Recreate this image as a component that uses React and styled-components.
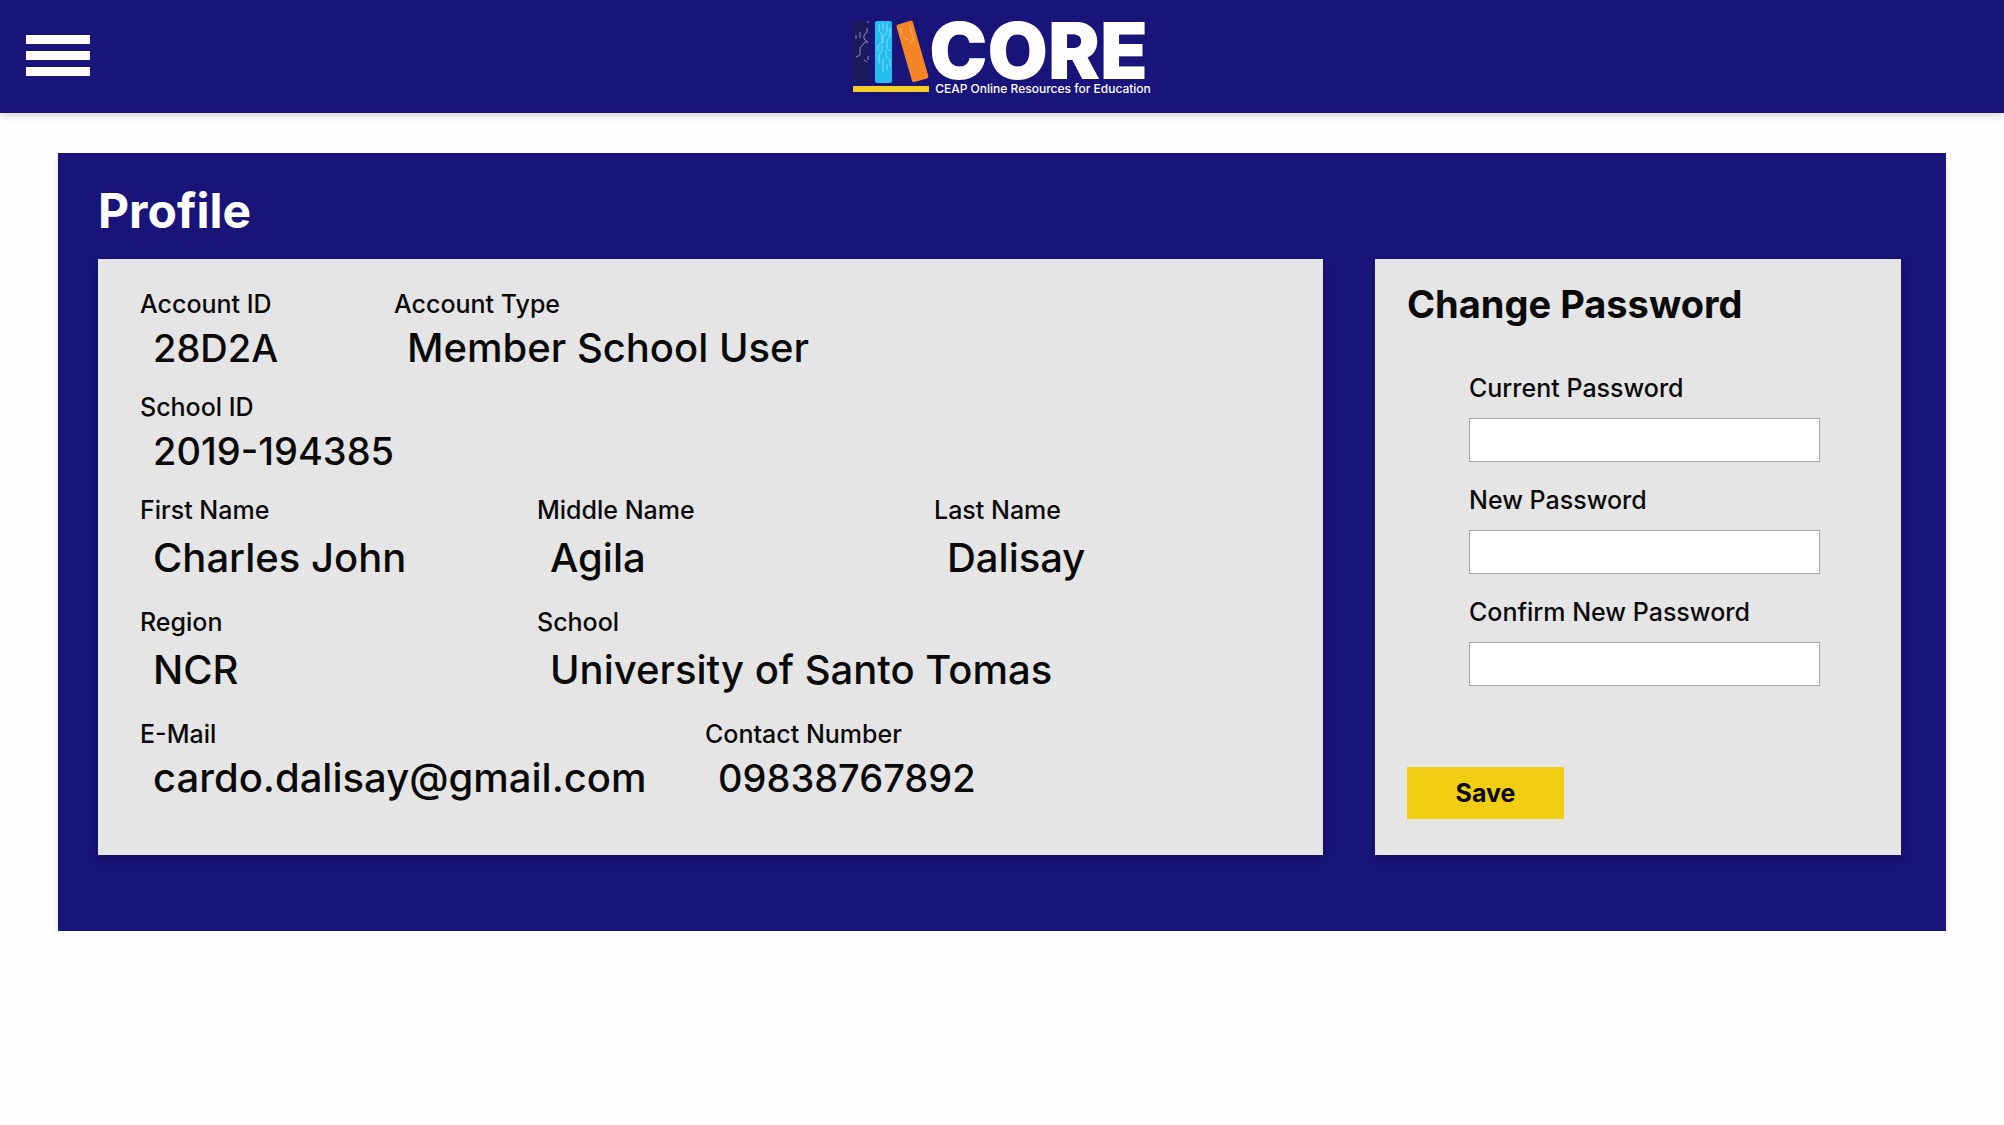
import React, { useId } from "react";
import styled, { createGlobalStyle } from "styled-components";

const GlobalStyle = createGlobalStyle`
  *, *::before, *::after { box-sizing: border-box; }
  body {
    margin: 0;
    background: #fefefe;
    color: #0a0a0a;
    font-family: Inter, "Open Sans", sans-serif;
    font-weight: 500;
  }
`;

const Header = styled.header`
  display: grid;
  grid-template-columns: 1fr auto 1fr;
  align-items: start;
  height: 113px;
  padding: 0 26px;
  background: #18147a;
  box-shadow: 0 4px 6px rgba(0, 0, 0, 0.12);
`;

const MenuButton = styled.button`
  display: flex;
  flex-direction: column;
  justify-self: start;
  gap: 7px;
  width: 64px;
  margin: 35px 0 0;
  padding: 0;
  border: 0;
  background: none;
  cursor: pointer;
`;

const MenuBar = styled.span`
  height: 9px;
  background: #fff;
`;

const Brand = styled.a`
  display: flex;
  padding-top: 20px;
  color: #fff;
  text-decoration: none;
`;

const BrandText = styled.span`
  display: flex;
  flex-direction: column;
`;

const BrandName = styled.span`
  font-size: 78px;
  font-weight: 900;
  line-height: 62px;
`;

const Tagline = styled.span`
  padding: 2px 0 0 6px;
  font-size: 12px;
  line-height: 10px;
`;

const Panel = styled.main`
  margin: 40px 58px 0;
  padding: 30px 45px 76px 40px;
  background: #18147a;
  box-shadow: 0 4px 6px rgba(0, 0, 0, 0.12);
`;

const PageTitle = styled.h1`
  margin: 0 0 20px;
  color: #fff;
  font-size: 48px;
  font-weight: 700;
  line-height: 56px;
`;

const Columns = styled.div`
  display: grid;
  grid-template-columns: 1225fr 526fr;
  gap: 52px;
`;

const Card = styled.section`
  background: #e5e5e5;
  box-shadow: 0 4px 8px rgba(0, 0, 0, 0.25);
`;

const Details = styled(Card)`
  padding: 31px 0 55px 42px;
`;

const Row = styled.dl`
  display: grid;
  grid-template-columns: ${(p) => p.$columns};
  margin: 0 0 ${(p) => (p.$roomy ? 28 : 23)}px;

  &:last-child { margin-bottom: 0; }

  dd { margin-top: ${(p) => (p.$roomy ? 12 : 8)}px; }
`;

const Term = styled.dt`
  font-size: 25px;
  line-height: 28px;
`;

const Value = styled.dd`
  margin: 0;
  padding-left: 13px;
  font-size: ${(p) => (p.$numeric ? 38 : 40)}px;
  line-height: 44px;
  white-space: nowrap;
`;

const PasswordForm = styled(Card).attrs({ as: "form" })`
  display: flex;
  flex-direction: column;
  padding: 21px 32px 36px;
`;

const FormTitle = styled.h2`
  margin: 0 0 46px;
  font-size: 38px;
  font-weight: 700;
  line-height: 48px;
`;

const Fields = styled.div`
  display: grid;
  gap: 24px;
  padding: 0 49px 0 62px;
`;

const Field = styled.div`
  display: grid;
  gap: 16px;
`;

const FieldLabel = styled.label`
  font-size: 25px;
  line-height: 28px;
  white-space: nowrap;
`;

const TextInput = styled.input`
  width: 100%;
  height: 44px;
  padding: 0 12px;
  border: 1px solid #a6a6a6;
  border-radius: 0;
  background: #fff;
  font: inherit;
  font-size: 25px;
`;

const SaveButton = styled.button`
  align-self: flex-start;
  width: 157px;
  height: 52px;
  margin-top: auto;
  border: 0;
  background: #f1cd13;
  color: #0a0a0a;
  font: inherit;
  font-size: 25px;
  font-weight: 700;
  cursor: pointer;
`;

const rows = [
  { columns: "254fr 929fr", items: [["Account ID", "28D2A"], ["Account Type", "Member School User"]] },
  { columns: "1fr", items: [["School ID", "2019-194385"]] },
  { columns: "397fr 397fr 389fr", roomy: true, items: [["First Name", "Charles John"], ["Middle Name", "Agila"], ["Last Name", "Dalisay"]] },
  { columns: "397fr 786fr", roomy: true, items: [["Region", "NCR"], ["School", "University of Santo Tomas"]] },
  { columns: "565fr 618fr", items: [["E-Mail", "cardo.dalisay@gmail.com"], ["Contact Number", "09838767892"]] },
];

function Books() {
  return (
    <svg width="76" height="74" viewBox="0 0 76 74" aria-hidden="true">
      <rect x="0" y="1" width="16" height="62" rx="1" fill="#1d1a5c" />
      <g fill="none" stroke="#8a8fb8" strokeWidth="1">
        <path d="M3 15v4M15 1v2M14 8v4l-3 3v4l4 3M7 12v6M15 22h-3l-5 6v7l-4 2M11 40l3 2M15 36v4" />
      </g>
      <rect x="22" y="1" width="17" height="62" rx="2" fill="#25bdf0" />
      <g fill="none" stroke="#86dcf6" strokeWidth="1">
        <path d="M26 4v7l3 3v8l-4 4v6M30 3v6M34 3v9l-4 5v6M37 8v8l-3 4v8l3 3M29 25v6l-3 4v8M33 30v6l4 4v6M30 38v14M34 44v6" />
      </g>
      <g transform="rotate(-16 43 5)">
        <rect x="43" y="5" width="17" height="60" rx="2" fill="#f68625" />
        <path d="M46 9v7M56 9v14l-5 4M47 19l4 4" fill="none" stroke="#fbb06c" />
      </g>
      <rect x="0" y="66" width="76" height="6" fill="#f1cd25" />
    </svg>
  );
}

function PasswordField({ label, autoComplete }) {
  const id = useId();
  return (
    <Field>
      <FieldLabel htmlFor={id}>{label}</FieldLabel>
      <TextInput id={id} type="password" autoComplete={autoComplete} />
    </Field>
  );
}

export default function App() {
  return (
    <>
      <GlobalStyle />
      <Header>
        <MenuButton type="button" aria-label="Menu">
          <MenuBar />
          <MenuBar />
          <MenuBar />
        </MenuButton>
        <Brand href="#">
          <Books />
          <BrandText>
            <BrandName>CORE</BrandName>
            <Tagline>CEAP Online Resources for Education</Tagline>
          </BrandText>
        </Brand>
      </Header>
      <Panel>
        <PageTitle>Profile</PageTitle>
        <Columns>
          <Details>
            {rows.map((row) => (
              <Row key={row.items[0][0]} $columns={row.columns} $roomy={row.roomy}>
                {row.items.map(([term, value]) => (
                  <div key={term}>
                    <Term>{term}</Term>
                    <Value $numeric={/^\d/.test(value)}>{value}</Value>
                  </div>
                ))}
              </Row>
            ))}
          </Details>
          <PasswordForm onSubmit={(e) => e.preventDefault()}>
            <FormTitle>Change Password</FormTitle>
            <Fields>
              <PasswordField label="Current Password" autoComplete="current-password" />
              <PasswordField label="New Password" autoComplete="new-password" />
              <PasswordField label="Confirm New Password" autoComplete="new-password" />
            </Fields>
            <SaveButton type="submit">Save</SaveButton>
          </PasswordForm>
        </Columns>
      </Panel>
    </>
  );
}
